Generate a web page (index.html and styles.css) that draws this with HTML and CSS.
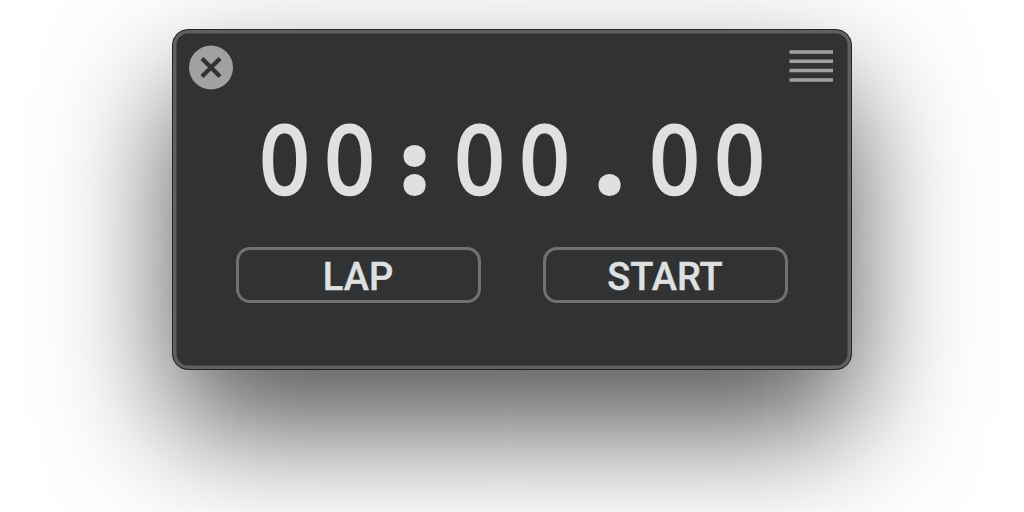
FILE: index.html
```html
<!DOCTYPE html>
<html lang="en">
<head>
    <meta charset="UTF-8">
    <meta name="viewport" content="width=device-width, initial-scale=1.0">
    <title>Stopwatch</title>
    <link rel="stylesheet" href="styles.css">
</head>
<body>
    <div class="stopwatch">
        <div class="toolbar">
            <button class="icon-button" aria-label="Close">
                <svg width="44" height="45" viewBox="0 0 44 45">
                    <circle cx="22" cy="22.5" r="22" fill="#a0a2a1"/>
                    <path d="M13 13.5 L31 31.5 M31 13.5 L13 31.5" stroke="#303233" stroke-width="4.3"/>
                </svg>
            </button>
            <button class="icon-button" aria-label="Menu">
                <svg width="44" height="45" viewBox="0 0 44 45">
                    <path d="M0.5 7 H44 M0.5 16.2 H44 M0.5 25.5 H44 M0.5 35 H44" stroke="#a0a2a1" stroke-width="3.6"/>
                </svg>
            </button>
        </div>

        <div class="time">
            <span>0</span>
            <span>0</span>
            <span class="dot">:</span>
            <span>0</span>
            <span>0</span>
            <span class="dot">.</span>
            <span>0</span>
            <span>0</span>
        </div>

        <div class="controls">
            <button class="control">LAP</button>
            <button class="control">START</button>
        </div>
    </div>
</body>
</html>
```

FILE: styles.css
```css
* {
    box-sizing: border-box;
    margin: 0;
    padding: 0;
}

body {
    height: 512px;
    padding-top: 29px;
    background: white;
    font-family: Roboto, sans-serif;
    overflow: hidden;
}

.stopwatch {
    width: 680px;
    height: 341px;
    margin: 0 auto;
    padding: 13px 13px 0;
    background: #303233;
    border: 1.5px solid #242424;
    border-radius: 16px;
    box-shadow: inset 0 0 0 3.5px #5f6060, 0 58px 124px rgba(0, 0, 0, 0.68);
}

.toolbar {
    display: flex;
    justify-content: space-between;
    padding: 2px 5px 0 3px;
}

.icon-button {
    width: 44px;
    height: 45px;
    background: none;
    border: none;
}

.icon-button svg {
    display: block;
}

.time {
    display: grid;
    grid-template-columns: repeat(8, 65.1px);
    justify-content: center;
    height: 120px;
    margin-top: 12px;
    color: #dfe0e0;
    font-family: "DejaVu Sans", sans-serif;
    font-size: 92px;
    line-height: 122px;
    text-align: center;
}

.time span {
    -webkit-text-stroke: 2.6px #dfe0e0;
    transform: scaleX(0.9);
}

.time .dot {
    font-family: "Open Sans", sans-serif;
    font-size: 70px;
    line-height: 121px;
    -webkit-text-stroke: 13px #dfe0e0;
    transform: scaleX(1.04);
}

.controls {
    display: flex;
    justify-content: center;
    gap: 62px;
    margin-top: 25px;
}

.control {
    width: 245px;
    height: 56px;
    padding: 3px 1px 0 0;
    background: transparent;
    border: 3px solid #707272;
    border-radius: 14px;
    color: #dfe0e0;
    font-family: Roboto, sans-serif;
    font-size: 38px;
    font-weight: 500;
    -webkit-text-stroke: 0.4px #dfe0e0;
}
```
